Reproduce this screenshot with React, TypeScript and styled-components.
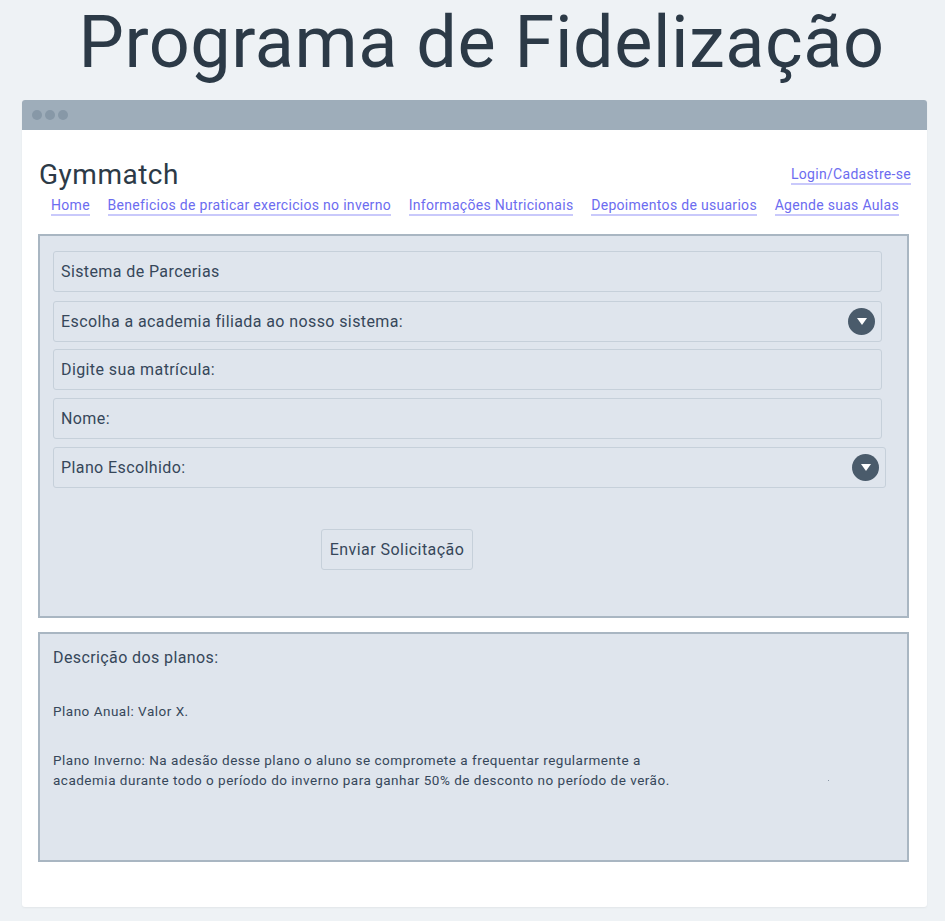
import React from "react";
import styled, { createGlobalStyle } from "styled-components";

const Global = createGlobalStyle`
  html, body { margin: 0; padding: 0; background: #eef2f5; }
  body { font-family: Roboto, "Noto Sans", sans-serif; color: #2c3e4e; }
  * { box-sizing: border-box; }
`;

const Page = styled.div`
  width: 945px;
  min-height: 921px;
  padding: 0 18px 15px 22px;
  display: flex;
  flex-direction: column;
`;

const Title = styled.h1`
  margin: 0;
  height: 100px;
  font-weight: 400;
  font-size: 72px;
  line-height: normal;
  letter-spacing: 0.55px;
  text-align: center;
  color: #2c3a47;
  padding-left: 14px;
  white-space: nowrap;
`;

const Browser = styled.div`
  width: 905px;
  background: #fff;
  border-radius: 3px;
  overflow: hidden;
  display: flex;
  flex-direction: column;
  box-shadow: 0 1px 2px rgba(0,0,0,0.05);
`;

const TitleBar = styled.div`
  height: 30px;
  background: #9eadba;
  display: flex;
  align-items: center;
  gap: 3px;
  padding-left: 10px;
`;

const Dot = styled.span`
  width: 10px;
  height: 10px;
  border-radius: 50%;
  background: #8798a7;
`;

const Content = styled.div`
  padding: 28px 16px 45px 16px;
  display: flex;
  flex-direction: column;
`;

const Header = styled.div`
  display: flex;
  justify-content: space-between;
  align-items: center;
  padding-left: 1px;
`;

const Brand = styled.div`
  font-size: 28px;
  line-height: 34px;
  color: #2c3a47;
  letter-spacing: 0.5px;
`;

const Link = styled.a`
  color: #6c6cf0;
  font-size: 14px;
  line-height: 18px;
  letter-spacing: 0.3px;
  text-decoration: none;
  border-bottom: 2px solid #c9c9fb;
  white-space: nowrap;
  cursor: pointer;
`;

const Nav = styled.nav`
  display: flex;
  align-items: flex-start;
  justify-content: space-between;
  padding: 4px 12px 0 13px;
  height: 42px;
`;

const Panel = styled.div<{ $h: number }>`
  background: #dfe5ed;
  border: 2px solid #a9b6c2;
  height: ${(p) => p.$h}px;
  width: 871px;
  letter-spacing: 0.4px;
`;

const Form = styled(Panel)`
  padding: 15px 25px 0 13px;
  display: flex;
  flex-direction: column;
`;

const Field = styled.div<{ $gap: number; $wide?: boolean }>`
  height: 41px;
  margin-top: ${(p) => p.$gap}px;
  margin-right: ${(p) => (p.$wide ? -4 : 0)}px;
  border: 1.5px solid #c6d0da;
  border-radius: 3px;
  display: flex;
  align-items: center;
  justify-content: space-between;
  padding: 0 6px 0 7px;
  font-size: 16px;
  color: #36475a;
`;

const Caret = styled.span`
  width: 27px;
  height: 27px;
  border-radius: 50%;
  background: #4a5b6b;
  display: flex;
  align-items: center;
  justify-content: center;
`;

const ButtonRow = styled.div`
  display: flex;
  padding: 41px 0 0 268px;
`;

const Button = styled.button`
  width: 152px;
  height: 41px;
  background: #dfe5ed;
  border: 1.5px solid #c6d0da;
  border-radius: 3px;
  font-family: inherit;
  font-size: 16px;
  letter-spacing: 0.45px;
  color: #36475a;
  padding: 0;
`;

const Desc = styled(Panel)`
  margin-top: 14px;
  padding: 14px 13px;
  position: relative;
  color: #36475a;
`;

const DescTitle = styled.div`
  font-size: 16px;
  line-height: 20px;
`;

const DescText = styled.p<{ $top: number }>`
  margin: ${(p) => p.$top}px 0 0 0;
  font-size: 13.5px;
  line-height: 20px;
  letter-spacing: 0.5px;
  white-space: nowrap;
`;

const Speck = styled.span`
  position: absolute;
  left: 788px;
  top: 146px;
  width: 1px;
  height: 1px;
  background: #8a98a6;
`;

const Dropdown = () => (
  <Caret>
    <svg width="12" height="9" viewBox="0 0 12 9">
      <path d="M1 1 H11 L6 8 Z" fill="#fff" />
    </svg>
  </Caret>
);

export default function App() {
  return (
    <>
      <Global />
      <Page>
        <Title>Programa de Fidelização</Title>
        <Browser>
          <TitleBar>
            <Dot />
            <Dot />
            <Dot />
          </TitleBar>
          <Content>
            <Header>
              <Brand>Gymmatch</Brand>
              <Link>Login/Cadastre-se</Link>
            </Header>
            <Nav>
              <Link>Home</Link>
              <Link>Beneficios de praticar exercicios no inverno</Link>
              <Link>Informações Nutricionais</Link>
              <Link>Depoimentos de usuarios</Link>
              <Link>Agende suas Aulas</Link>
            </Nav>
            <Form $h={384}>
              <Field $gap={0}>Sistema de Parcerias</Field>
              <Field $gap={9}>
                Escolha a academia filiada ao nosso sistema:
                <Dropdown />
              </Field>
              <Field $gap={7}>Digite sua matrícula:</Field>
              <Field $gap={8}>Nome:</Field>
              <Field $gap={8} $wide>
                Plano Escolhido:
                <Dropdown />
              </Field>
              <ButtonRow>
                <Button>Enviar Solicitação</Button>
              </ButtonRow>
            </Form>
            <Desc $h={230}>
              <DescTitle>Descrição dos planos:</DescTitle>
              <DescText $top={33}>Plano Anual: Valor X.</DescText>
              <DescText $top={29}>
                Plano Inverno: Na adesão desse plano o aluno se compromete a frequentar regularmente a
                <br />
                academia durante todo o período do inverno para ganhar 50% de desconto no período de verão.
              </DescText>
              <Speck />
            </Desc>
          </Content>
        </Browser>
      </Page>
    </>
  );
}
